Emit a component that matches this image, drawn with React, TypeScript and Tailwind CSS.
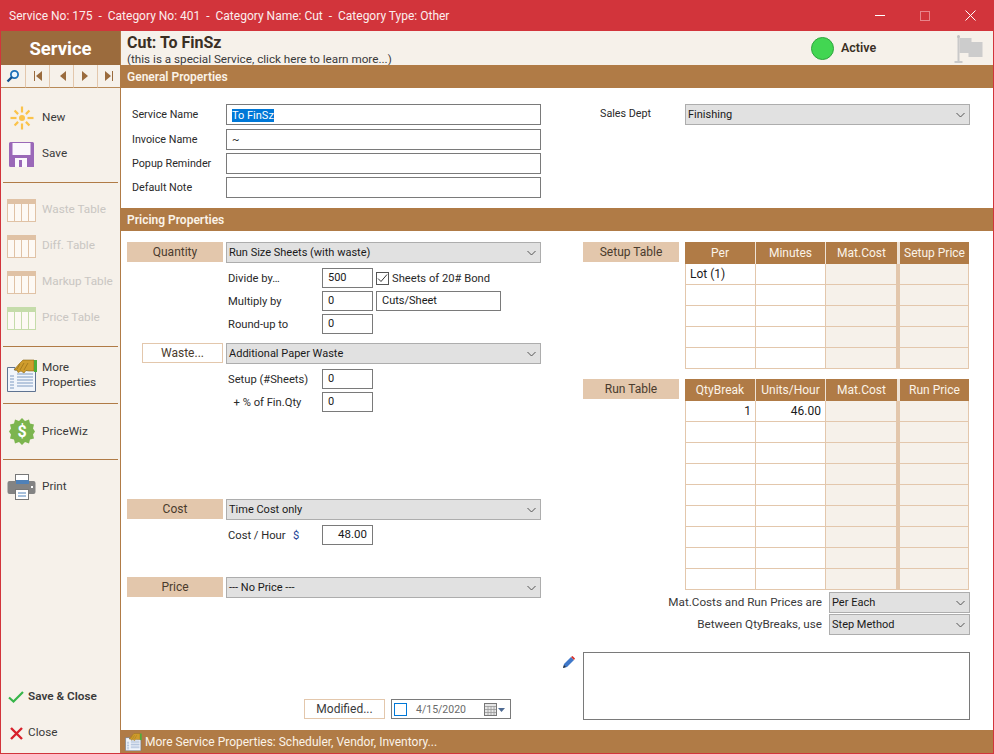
import type { ReactNode } from 'react';

const font = { fontFamily: 'Roboto, "Open Sans", sans-serif' };

function Chevron() {
  return (
    <svg width="9" height="6" viewBox="0 0 9 6" className="shrink-0">
      <path d="M.5 1l4 4 4-4" fill="none" stroke="#555" strokeWidth="1" />
    </svg>
  );
}

function SelectBox({ value, width }: { value: string; width: string }) {
  return (
    <div className={`${width} h-[21px] shrink-0 flex items-center justify-between bg-[#e1e1e1] border border-[#adadad] pl-[2px] pr-[4px] text-[11px] text-[#1a1a1a]`}>
      <span className="pt-[2px]">{value}</span>
      <Chevron />
    </div>
  );
}

function LabelBox({ children, width = 'w-[96px]' }: { children: ReactNode; width?: string }) {
  return (
    <div className={`${width} h-[20px] pb-px shrink-0 flex items-center justify-center bg-[#e3c7ac] text-[#4a3b2c]`}>{children}</div>
  );
}

function Input({ value, width, height = 'h-[20px]' }: { value?: ReactNode; width: string; height?: string }) {
  return (
    <div className={`${width} ${height} shrink-0 flex items-center bg-white border border-[#7a7a7a] pl-[5px] text-[11px] text-[#1a1a1a]`}>
      <span className="pt-px">{value}</span>
    </div>
  );
}

function SubRow({ label, children }: { label: string; children: ReactNode }) {
  return (
    <div className="flex items-center h-[20px] ml-[101px] text-[11.2px] text-[#2a2a2a]">
      <div className="w-[94px] pt-[3px] shrink-0 whitespace-pre">{label}</div>
      {children}
    </div>
  );
}

function SectionBar({ children }: { children: ReactNode }) {
  return (
    <div className="h-[23px] shrink-0 flex items-center pl-[6px] bg-[#b07b46] text-[#fbf3e8] font-semibold">{children}</div>
  );
}

function GridTable({ headers, rows, first }: { headers: string[]; rows: number; first: string[][] }) {
  const cols = ['w-[71px] border-l', 'w-[70px]', 'w-[74px] border-r-[4px]', 'w-[69px]'];
  return (
    <div className="w-[284px] shrink-0">
      <div className="flex h-[22px]">
        {headers.map((h, i) => (
          <div
            key={h}
            className={`${i === 0 ? 'w-[71px]' : i === 1 ? 'w-[70px]' : i === 2 ? 'w-[74px] border-r-[3px]' : 'w-[69px]'} border-r border-[#efe3d6] last:border-r-0 flex items-center justify-center bg-[#b07b46] text-[#fbf3e8]`}
          >
            {h}
          </div>
        ))}
      </div>
      {Array.from({ length: rows }).map((_, r) => (
        <div key={r} className="flex h-[21px]">
          {cols.map((c, i) => (
            <div
              key={c}
              className={`${c} border-r border-b border-[#e3c7ac] flex items-center ${i > 1 ? 'bg-[#f6f1ea]' : 'bg-white'} ${first[r]?.[i] && first[r][i] !== 'Lot (1)' ? 'justify-end pr-[4px]' : 'pl-[4px]'} text-[#1a1a1a]`}
            >
              {first[r]?.[i]}
            </div>
          ))}
        </div>
      ))}
    </div>
  );
}

function SunIcon() {
  const rays = [0, 45, 90, 135, 180, 225, 270, 315];
  return (
    <svg width="24" height="24" viewBox="0 0 24 24">
      <circle cx="12" cy="12" r="3" fill="#fbc34a" />
      {rays.map((a) => (
        <line key={a} x1="12" y1="6.5" x2="12" y2={a % 90 === 0 ? '0.5' : '1.5'} stroke="#fbc34a" strokeWidth="2.2" transform={`rotate(${a} 12 12)`} />
      ))}
    </svg>
  );
}

function SaveIcon() {
  return (
    <svg width="25" height="25" viewBox="0 0 25 25">
      <path d="M0 1.5A1.5 1.5 0 0 1 1.5 0H23.5A1.5 1.5 0 0 1 25 1.5V25H1.5A1.5 1.5 0 0 1 0 23.5Z" fill="#9a68b8" />
      <rect x="3.5" y="1" width="18" height="12" fill="#fbf8fc" />
      <rect x="6" y="16" width="12" height="9" fill="#fbf8fc" />
      <rect x="10" y="18" width="3" height="7" fill="#9a68b8" />
    </svg>
  );
}

function TableIcon({ green }: { green?: boolean }) {
  const c = green ? '#c5dcaa' : '#e0c2a5';
  return (
    <svg width="29" height="23" viewBox="0 0 29 23">
      <rect x="0.5" y="0.5" width="28" height="22" fill="#fdf9f4" stroke={c} />
      <rect x="0" y="0" width="29" height="5" fill={c} />
      <path d="M7.5 5V23M14.5 5V23M21.5 5V23" stroke={c} />
    </svg>
  );
}

function MorePropsIcon({ small }: { small?: boolean }) {
  return (
    <svg width={small ? 17 : 30} height={small ? 18 : 33} viewBox="0 0 30 33">
      <path d="M.5 8.5H8V11H28.5V32.5H.5Z" fill="#f1f5fb" stroke="#5f7391" />
      <path d="M3 17h4M3 20h4M3 23h4M3 26h4M3 29h4M10 15h16M10 18h16M10 21h16M10 24h16M10 27h16" stroke="#7f9bc2" />
      <path d="M7 11L12 5L16 1H27V12H22L19 11.5L17 14L14 12L11 13.5L10 11Z" fill="#cf9c2c" stroke="#8a6512" strokeWidth="0.6" />
      <path d="M13 5L10 10M17 4L13 11M21 4L17 11" stroke="#8a6512" strokeWidth="0.6" />
      <rect x="27" y="1" width="3" height="12" fill="#4fae3a" />
    </svg>
  );
}

function PriceWizIcon() {
  return (
    <svg width="26" height="27" viewBox="0 0 26 27">
      <polygon
        points="13,0 16,3 20,1.5 21,5.5 25,6.5 24,10.5 26,13.5 24,16.5 25,20.5 21,21.5 20,25.5 16,24 13,27 10,24 6,25.5 5,21.5 1,20.5 2,16.5 0,13.5 2,10.5 1,6.5 5,5.5 6,1.5 10,3"
        fill="#7cb54f"
      />
      <text x="13" y="19" textAnchor="middle" fontSize="16" fontWeight="700" fill="#fff" style={font}>$</text>
    </svg>
  );
}

function PrintIcon() {
  return (
    <svg width="29" height="26" viewBox="0 0 29 26">
      <rect x="8.5" y="0.5" width="13" height="8" fill="#fff" stroke="#777" />
      <path d="M2.5 7H26.5A2 2 0 0 1 28.5 9V18A2 2 0 0 1 26.5 20H2.5A2 2 0 0 1 0.5 18V9A2 2 0 0 1 2.5 7Z" fill="#838383" />
      <rect x="9" y="6" width="13" height="4" fill="#4f81b8" />
      <rect x="8.5" y="15.5" width="13" height="10" fill="#fff" stroke="#777" />
      <path d="M11 19h8M11 22h8" stroke="#4f81b8" />
      <rect x="24" y="12" width="2" height="2" fill="#fff" />
    </svg>
  );
}

function NavIcon({ kind }: { kind: string }) {
  if (kind === 'search') {
    return (
      <svg width="14" height="14" viewBox="0 0 14 14">
        <circle cx="8.5" cy="5.5" r="3.6" fill="#eaf5fd" stroke="#1c6fb8" strokeWidth="1.8" />
        <line x1="6" y1="8" x2="1.5" y2="12.5" stroke="#14508c" strokeWidth="2.4" />
      </svg>
    );
  }
  return (
    <svg width="10" height="10" viewBox="0 0 10 10">
      {kind === 'first' && <path d="M1.5 0v10" stroke="#9a6b3d" strokeWidth="1" />}
      {(kind === 'first' || kind === 'prev') && <path d="M9 0v10L3 5Z" fill="#9a6b3d" />}
      {(kind === 'last' || kind === 'next') && <path d="M1 0v10L7 5Z" fill="#9a6b3d" />}
      {kind === 'last' && <path d="M8.5 0v10" stroke="#9a6b3d" strokeWidth="1" />}
    </svg>
  );
}

function SideItem({ icon, label, height = 'h-[36px]', muted, bold, iconWidth = 'w-[41px]' }: { icon: ReactNode; label: ReactNode; height?: string; muted?: boolean; bold?: boolean; iconWidth?: string }) {
  return (
    <div className={`flex items-center ${height}`}>
      <div className={`${iconWidth} shrink-0 flex justify-center`}>{icon}</div>
      <div className={`${muted ? 'text-[#c9c6c2]' : 'text-[#3a3a3a]'} ${bold ? 'font-semibold' : ''} text-[11.75px] leading-[15px] pb-px`}>{label}</div>
    </div>
  );
}

function SideRule() {
  return <div className="h-px mx-[2px] bg-[#b07b46]" />;
}

function Sidebar() {
  return (
    <div className="w-[120px] shrink-0 flex flex-col bg-[#f6f1ea] border-r border-[#b07b46]">
      <div className="h-[34px] pt-[3px] shrink-0 flex items-center justify-center bg-[#9b6b3d] text-white font-bold text-[18.5px]">Service</div>
      <div className="h-[23px] shrink-0 flex mb-[12px]">
        {['search', 'first', 'prev', 'next', 'last'].map((k, i) => (
          <div
            key={k}
            className={`${i === 0 ? 'w-[25px]' : i === 4 ? 'w-[22px]' : 'w-[24px]'} flex items-center justify-center border-b border-r border-b-[#b88a58] border-r-[#e3c7ac] last:border-r-0`}
          >
            <NavIcon kind={k} />
          </div>
        ))}
      </div>
      <SideItem icon={<SunIcon />} label="New" />
      <SideItem icon={<SaveIcon />} label="Save" />
      <div className="mt-[10px] mb-[9px]"><SideRule /></div>
      <SideItem icon={<TableIcon />} label="Waste Table" muted />
      <SideItem icon={<TableIcon />} label="Diff. Table" muted />
      <SideItem icon={<TableIcon />} label="Markup Table" muted />
      <SideItem icon={<TableIcon green />} label="Price Table" muted />
      <div className="mt-[10px]"><SideRule /></div>
      <SideItem icon={<MorePropsIcon />} label={<>More<br />Properties</>} height="h-[56px]" />
      <SideRule />
      <SideItem icon={<PriceWizIcon />} label="PriceWiz" height="h-[55px]" />
      <SideRule />
      <SideItem icon={<PrintIcon />} label="Print" height="h-[54px]" />
      <div className="mt-auto mb-[2px]">
        <SideItem
          iconWidth="w-[27px] pl-[3px]"
          icon={
            <svg width="16" height="12" viewBox="0 0 16 12">
              <path d="M1 6.5l4.5 4L15 1" fill="none" stroke="#37b54a" strokeWidth="2.2" />
            </svg>
          }
          label="Save & Close"
          bold
        />
        <SideItem
          iconWidth="w-[27px] pl-[3px]"
          icon={
            <svg width="13" height="13" viewBox="0 0 13 13">
              <path d="M1 1l11 11M12 1L1 12" stroke="#d8202a" strokeWidth="2.4" />
            </svg>
          }
          label="Close"
        />
      </div>
    </div>
  );
}

function GeneralProperties() {
  const rows = [
    { label: 'Service Name', mt: 'mt-0', value: <span className="block bg-[#0078d7] text-white leading-[13px]">To FinSz</span> },
    { label: 'Invoice Name', mt: 'mt-[4px]', value: '~' },
    { label: 'Popup Reminder', mt: 'mt-[3px]' },
    { label: 'Default Note', mt: 'mt-[3px]' },
  ];
  return (
    <div className="h-[120px] shrink-0 flex pt-[16px] pl-[11px] text-[10.75px]">
      <div className="w-[420px] shrink-0">
        {rows.map((r) => (
          <div key={r.label} className={`flex items-center ${r.mt} text-[#2a2a2a]`}>
            <div className="w-[94px] pt-px shrink-0">{r.label}</div>
            <Input width="w-[315px]" height="h-[21px]" value={r.value} />
          </div>
        ))}
      </div>
      <div className="flex items-start ml-[48px] text-[#2a2a2a]">
        <div className="w-[85px] shrink-0 h-[21px] flex items-center">Sales Dept</div>
        <SelectBox value="Finishing" width="w-[285px]" />
      </div>
    </div>
  );
}

function PricingLeft() {
  return (
    <div className="w-[414px] shrink-0 flex flex-col">
      <div className="flex gap-[3px]">
        <LabelBox>Quantity</LabelBox>
        <SelectBox value="Run Size Sheets (with waste)" width="w-[315px]" />
      </div>
      <div className="flex flex-col gap-[3px] mt-[5px]">
        <SubRow label="Divide by…">
          <Input value="500" width="w-[51px]" />
          <div className="ml-[3px] w-[13px] h-[13px] border border-[#555] flex items-center justify-center bg-white">
            <svg width="11" height="9" viewBox="0 0 11 9"><path d="M1 4.5l3 3 6-7" fill="none" stroke="#333" /></svg>
          </div>
          <span className="ml-[3px] pt-[2px]">Sheets of 20# Bond</span>
        </SubRow>
        <SubRow label="Multiply by">
          <Input value="0" width="w-[51px]" />
          <div className="ml-[3px]"><Input value="Cuts/Sheet" width="w-[125px]" /></div>
        </SubRow>
        <SubRow label="Round-up to">
          <Input value="0" width="w-[51px]" />
        </SubRow>
      </div>
      <div className="flex gap-[3px] mt-[9px] ml-[15px]">
        <LabelBox width="w-[81px]">
          <div className="w-full h-[20px] -mb-px pb-px flex items-center justify-center bg-white border border-[#e3c7ac]">Waste...</div>
        </LabelBox>
        <SelectBox value="Additional Paper Waste" width="w-[315px]" />
      </div>
      <div className="flex flex-col gap-[3px] mt-[5px]">
        <SubRow label="Setup (#Sheets)">
          <Input value="0" width="w-[51px]" />
        </SubRow>
        <SubRow label="  + % of Fin.Qty">
          <Input value="0" width="w-[51px]" />
        </SubRow>
      </div>
      <div className="flex gap-[3px] mt-[87px]">
        <LabelBox>Cost</LabelBox>
        <SelectBox value="Time Cost only" width="w-[315px]" />
      </div>
      <div className="mt-[5px] ml-[101px] h-[20px] flex items-center text-[11.2px] text-[#2a2a2a]">
        <span className="w-[65px] pt-[3px] shrink-0">Cost / Hour</span>
        <span className="w-[29px] pt-[3px] shrink-0 text-[#1c3f94]">$</span>
        <div className="w-[51px] h-[20px] flex items-center justify-end pr-[5px] border border-[#7a7a7a] text-[11.5px] text-[#1a1a1a]">48.00</div>
      </div>
      <div className="flex gap-[3px] mt-[32px]">
        <LabelBox>Price</LabelBox>
        <SelectBox value="--- No Price ---" width="w-[315px]" />
      </div>
      <div className="mt-auto mb-px ml-[177px] flex items-center gap-[6px]">
        <div className="w-[81px] h-[20px] flex items-center justify-center bg-white border border-[#e3c7ac] text-[#3a3a3a]">Modified...</div>
        <div className="w-[120px] h-[20px] flex items-center border border-[#7a7a7a] text-[10.5px] text-[#6a6a6a] pl-[2px]">
          <div className="w-[13px] h-[13px] border border-[#0078d7]" />
          <span className="ml-[9px] w-[49px] pt-px">4/15/2020</span>
          <svg width="22" height="13" viewBox="0 0 22 13" className="ml-[19px]">
            <rect x="0.5" y="0.5" width="12" height="12" fill="#e6e6e6" stroke="#777" />
            <path d="M1 3.5h11M1 6.5h11M1 9.5h11M4 3v9M7 3v9M10 3v9" stroke="#999" strokeWidth="0.8" />
            <path d="M14 5h7l-3.5 4Z" fill="#4e6a92" />
          </svg>
        </div>
      </div>
    </div>
  );
}

function PricingRight() {
  return (
    <div className="w-[408px] shrink-0 flex flex-col">
      <div className="flex pl-[21px] gap-[6px]">
        <LabelBox>Setup Table</LabelBox>
        <GridTable headers={['Per', 'Minutes', 'Mat.Cost', 'Setup Price']} rows={5} first={[['Lot (1)']]} />
      </div>
      <div className="flex pl-[21px] gap-[6px] mt-[10px]">
        <LabelBox>Run Table</LabelBox>
        <GridTable headers={['QtyBreak', 'Units/Hour', 'Mat.Cost', 'Run Price']} rows={9} first={[['1', '46.00']]} />
      </div>
      <div className="flex justify-end items-center gap-[7px] mt-[2px] text-[11.7px] text-[#3a3a3a]">
        <span>Mat.Costs and Run Prices are</span>
        <SelectBox value="Per Each" width="w-[141px]" />
      </div>
      <div className="flex justify-end items-center gap-[7px] mt-px text-[11.7px] text-[#3a3a3a]">
        <span>Between QtyBreaks, use</span>
        <SelectBox value="Step Method" width="w-[141px]" />
      </div>
      <div className="flex mt-[17px]">
        <div className="w-[21px] shrink-0 pt-[4px]">
          <svg width="13" height="13" viewBox="0 0 13 13">
            <path d="M1 12l1-4 7-7 3 3-7 7Z" fill="#3f78c9" />
            <path d="M9 1l1.5-1L13 2.5 12 4Z" fill="#d8302a" />
            <path d="M1 12l1-3 2 2Z" fill="#333" />
          </svg>
        </div>
        <div className="w-[387px] h-[68px] bg-white border border-[#7a7a7a]" />
      </div>
    </div>
  );
}

export default function App() {
  return (
    <div className="w-[994px] h-[754px] flex flex-col overflow-hidden bg-[#d2343b] text-[12px] px-px pb-px" style={font}>
      <div className="h-[31px] shrink-0 flex items-center justify-between text-[#fbeeee] pl-[8px]">
        <span className="whitespace-pre">Service No: 175  -  Category No: 401  -  Category Name: Cut  -  Category Type: Other</span>
        <div className="flex items-center h-full">
          <div className="w-[45px] flex justify-center"><div className="w-[10px] h-px bg-white" /></div>
          <div className="w-[45px] flex justify-center"><div className="w-[10px] h-[10px] border border-[#e8848a]" /></div>
          <div className="w-[46px] flex justify-center">
            <svg width="11" height="11" viewBox="0 0 11 11"><path d="M.5.5l10 10M10.5.5l-10 10" stroke="#fff" /></svg>
          </div>
        </div>
      </div>
      <div className="flex-1 min-h-0 flex">
        <Sidebar />
        <div className="flex-1 min-w-0 flex flex-col bg-white">
          <div className="h-[34px] shrink-0 relative flex bg-[#f6f1ea] pl-[6px] overflow-hidden">
            <div className="flex flex-col">
              <div className="font-bold text-[16px] leading-[18px] mt-[3px] text-[#3a2f24]">Cut: To FinSz</div>
              <div className="text-[11.7px] text-[#3a3a3a] leading-[14px]">(this is a special Service, click here to learn more...)</div>
            </div>
            <div className="ml-auto flex items-center pr-[9px]">
              <div className="w-[23px] h-[23px] rounded-full bg-[#42d652] border border-[#2ea53d]" />
              <span className="ml-[7px] w-[112px] font-semibold text-[12.5px] text-[#3a2f24]">Active</span>
              <svg width="31" height="30" viewBox="0 0 30 30" className="mt-px">
                <path d="M5 3V27M1 28H9" stroke="#c9c9c9" strokeWidth="2" />
                <circle cx="5" cy="2.5" r="1.5" fill="#c0c0c0" />
                <path d="M6 4H18V8H29V23H15V19H6Z" fill="#cccccc" />
              </svg>
            </div>
          </div>
          <SectionBar>General Properties</SectionBar>
          <GeneralProperties />
          <SectionBar>Pricing Properties</SectionBar>
          <div className="flex-1 min-h-0 flex pt-[11px] pb-[10px] pl-[6px] gap-[21px]">
            <PricingLeft />
            <PricingRight />
          </div>
          <div className="h-[23px] shrink-0 flex items-center pl-[4px] gap-[3px] bg-[#b07b46] text-[#fbf3e8]">
            <MorePropsIcon small />
            <span>More Service Properties: Scheduler, Vendor, Inventory...</span>
          </div>
        </div>
      </div>
    </div>
  );
}
